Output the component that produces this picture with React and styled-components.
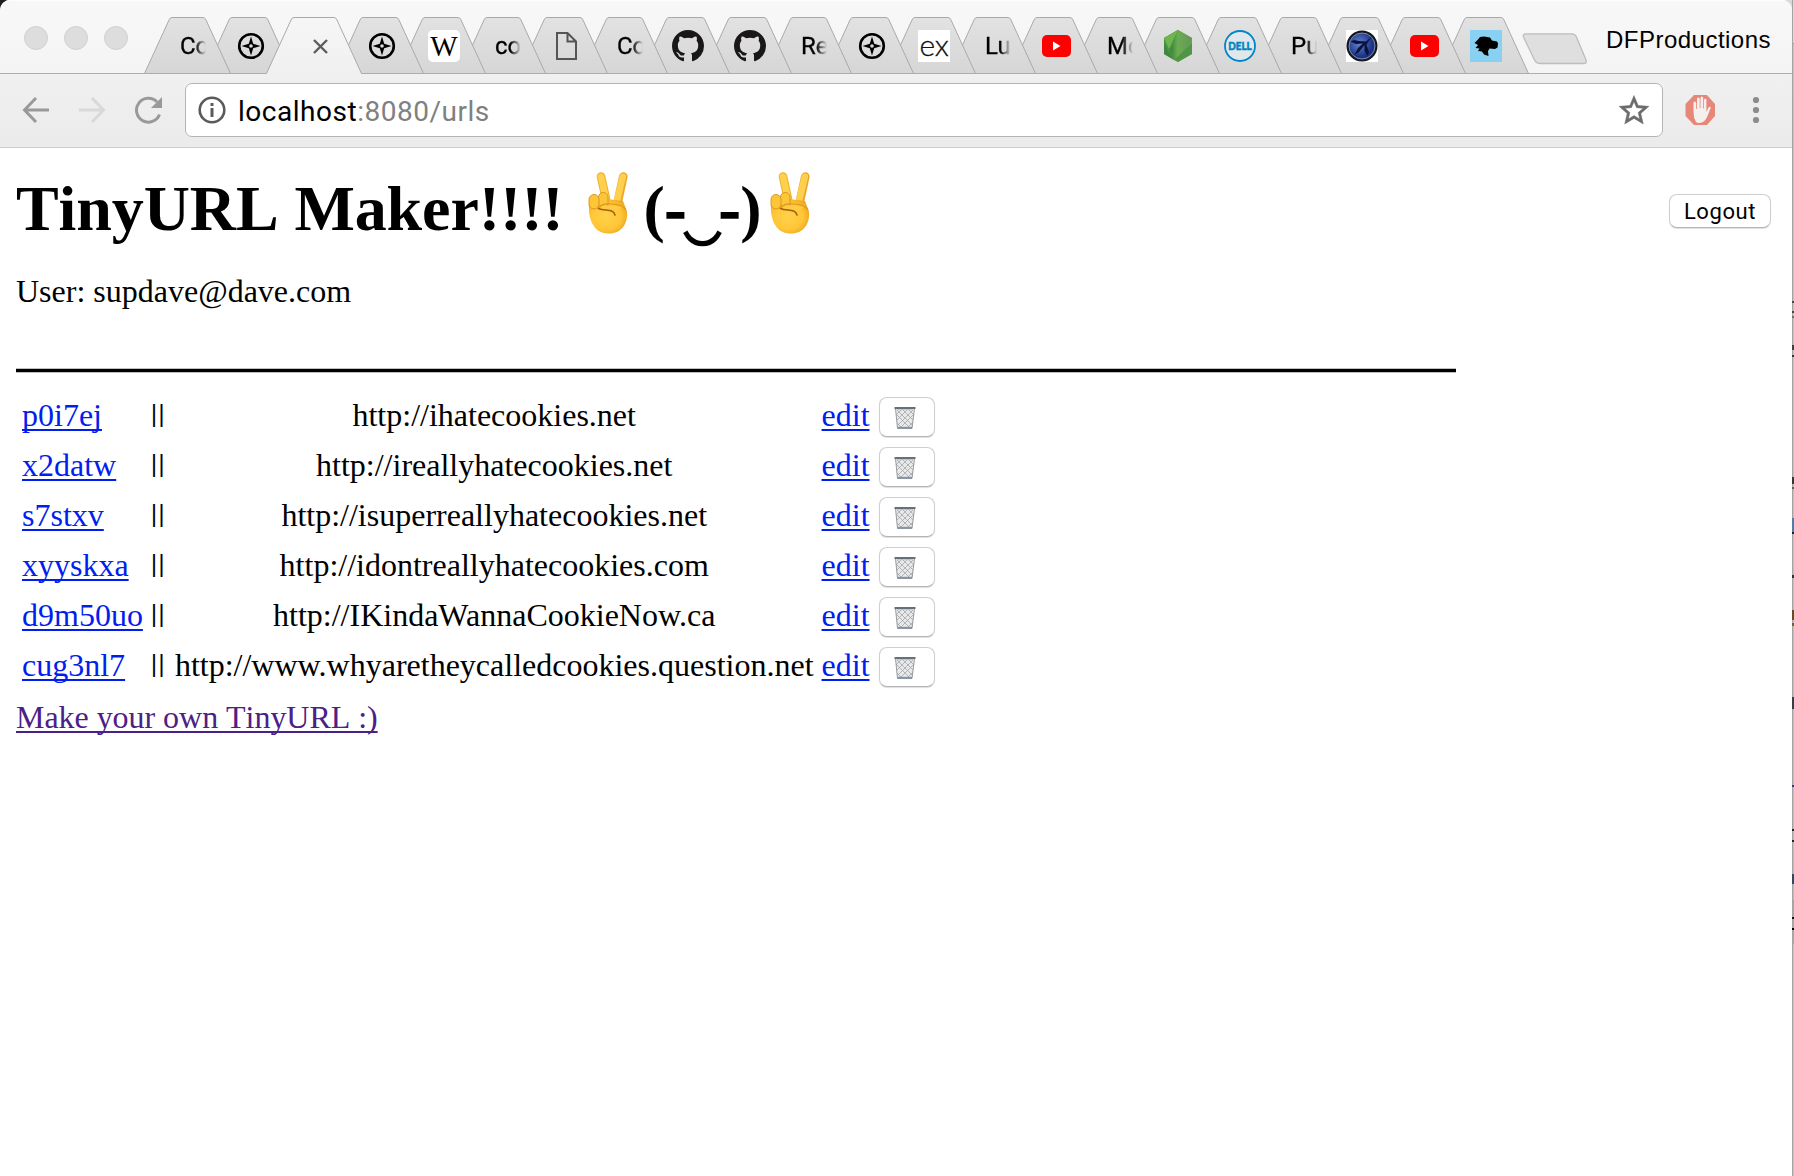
import React from "react";
import styled, { createGlobalStyle } from "styled-components";

const ui = `Roboto, "Liberation Sans", sans-serif`;
const serif = `"Liberation Serif", "Times New Roman", serif`;

const GlobalStyle = createGlobalStyle`
  *, *::before, *::after { box-sizing: border-box; }
  html, body { margin: 0; padding: 0; background: #b9b9b8; overflow: hidden; }
`;

const Desktop = styled.div`
  display: flex;
  width: 1794px;
  height: 1176px;
  overflow: hidden;
  background: linear-gradient(90deg, #1d1d22 50%, #d9d9d9 50%);
`;

const Window = styled.div`
  display: flex;
  flex-direction: column;
  width: 1792px;
  height: 1176px;
  border-radius: 10px 10px 0 0;
  overflow: hidden;
  background: #fff;
`;

const Behind = styled.div`
  display: flex;
  flex-direction: column;
  width: 2px;
  height: 1176px;
  border-left: 1px solid #a4a4a4;
  background: linear-gradient(#dadada 43px, #9f9f9f 43px, #9f9f9f 44px, #c4c4c4 44px, #bcbcbc 900px, #a3a9ad 900px, #a3a9ad 944px, #c4c4c4 944px);
`;

const Speck = styled.i`
  display: block;
  flex: none;
  width: 2px;
  margin-left: -1px;
  height: ${(p) => p.$h}px;
  margin-top: ${(p) => p.$gap}px;
  background: ${(p) => p.$color};
`;

const TitleBar = styled.header`
  display: flex;
  height: 74px;
  flex: none;
  padding-left: 24px;
  background: linear-gradient(#f8f8f8, #f4f4f4);
  box-shadow: inset 0 -1px #adadad, inset 0 1px #fdfdfd;
`;

const Lights = styled.div`
  display: flex;
  gap: 16px;
  padding-top: 26px;
  width: 120px;
  flex: none;
`;

const Light = styled.span`
  width: 24px;
  height: 24px;
  border-radius: 50%;
  border: 1px solid #d0d0d0;
  background: #dddddd;
`;

const TabStrip = styled.nav`
  display: flex;
  padding-top: 17px;
  height: 74px;
  isolation: isolate;
`;

const TabBox = styled.div`
  position: relative;
  display: flex;
  width: ${(p) => p.$w}px;
  height: 57px;
  flex: none;
  margin-right: -27px;
  z-index: ${(p) => p.$z};
  padding: 13px 0 0 ${(p) => (p.$text ? 36 : 31)}px;
`;

const TabShape = styled.svg`
  position: absolute;
  inset: 0;
  z-index: -1;
`;

const TabLabel = styled.span`
  width: 26px;
  height: 32px;
  white-space: nowrap;
  font: 24px/32px ${ui};
  -webkit-text-stroke: 0.3px #000;
  color: #000;
  mask-image: linear-gradient(90deg, #000 58%, transparent 100%);
`;

const TabIcon = styled.svg`
  width: 32px;
  height: 32px;
  flex: none;
`;

const ExIcon = styled.span`
  width: 32px;
  height: 32px;
  background: #fff;
  color: #111;
  font: 300 30px/29px Lato, sans-serif;
  -webkit-text-stroke: 0.3px #111;
  letter-spacing: -0.3px;
  text-align: center;
`;

const WikiIcon = styled.span`
  width: 32px;
  height: 32px;
  border-radius: 5px;
  background: #fff;
  color: #000;
  font: 29px/33px ${serif};
  display: flex;
  justify-content: center;
`;

const NewTab = styled.svg`
  margin: 33px 0 0 20px;
  flex: none;
`;

const Profile = styled.span`
  margin-left: auto;
  padding: 25px 21px 0 0;
  font: 24px/30px "Liberation Sans", Arial, sans-serif;
  letter-spacing: 0.48px;
  color: #000;
`;

const Toolbar = styled.div`
  display: flex;
  align-items: flex-start;
  flex: none;
  height: 74px;
  padding: 9px 0 0 22px;
  background: linear-gradient(#f0f0f0, #ebebeb);
  border-bottom: 1px solid #cbcbcb;
`;

const NavIcon = styled.svg`
  width: 28px;
  height: 28px;
  flex: none;
  margin: 13px ${(p) => p.$gap}px 0 0;
`;

const AddressBar = styled.div`
  display: flex;
  align-items: center;
  width: 1478px;
  height: 54px;
  border: 1px solid #b4b4b4;
  border-radius: 7px;
  background: #fff;
  padding: 0 13px 0 12px;
`;

const Address = styled.span`
  flex: 1;
  margin-left: 12px;
  font: 28px/50px ${ui};
  letter-spacing: 0.52px;
  padding-top: 3px;
  color: #808080;
`;

const Host = styled.span`
  color: #000;
`;

const ActionIcon = styled.svg`
  flex: none;
  margin: ${(p) => p.$m};
`;

const Page = styled.main`
  display: flex;
  flex-direction: column;
  flex: 1;
  padding: 0 21px 0 16px;
  font: 32px/37px ${serif};
  color: #000;
`;

const PageHead = styled.div`
  display: flex;
  justify-content: space-between;
  align-items: flex-start;
  height: 125px;
`;

const Title = styled.h1`
  display: flex;
  margin: 24px 0 0;
  font: bold 64px/74px ${serif};
  font-kerning: none;
  letter-spacing: -0.1px;
  white-space: pre;
`;

const Hand = styled.svg`
  flex: none;
  margin-top: -3px;
`;

const Eye = styled.span`
  -webkit-text-stroke: 1.4px #000;
`;

const Smile = styled.span`
  width: 33px;
  display: inline-flex;
  justify-content: center;
`;

const Button = styled.button`
  display: flex;
  align-items: center;
  justify-content: center;
  padding: 1px ${(p) => p.$nudge || 0}px 0 0;
  margin: ${(p) => p.$m};
  width: ${(p) => p.$w}px;
  height: ${(p) => p.$h}px;
  border: 1px solid #cfcfcf;
  border-bottom-color: #b4b4b4;
  border-radius: 8px;
  background: #fff;
  box-shadow: 0 1px 1px rgba(0, 0, 0, 0.13);
  font: 22px/30px ${ui};
  letter-spacing: 0.6px;
  color: #000;
`;

const User = styled.p`
  margin: 0;
  height: 95px;
`;

const Rule = styled.div`
  width: 1440px;
  height: 5px;
  background: #000;
  border: solid #c0c0c0;
  border-width: 1px 0;
`;

const Table = styled.table`
  margin-top: 17px;
  align-self: flex-start;
  border-collapse: separate;
  border-spacing: 4px;
`;

const Cell = styled.td`
  height: 46px;
  padding: 0 2px ${(p) => (p.$control ? 0 : 4)}px;
  line-height: 37px;
  text-align: ${(p) => (p.$center ? "center" : "left")};
  vertical-align: middle;
`;

const Link = styled.a`
  color: ${(p) => (p.$visited ? "#4b2087" : "#001eee")};
  font-kerning: ${(p) => (p.$visited ? "none" : "auto")};
  text-decoration: underline;
  text-decoration-thickness: 2px;
  text-underline-offset: 3px;
  text-decoration-skip-ink: none;
`;

const Bars = styled.span`
  display: block;
  width: 16px;
  padding: 0 0 7px;
  font: 23px/30px "Liberation Sans", sans-serif;
  letter-spacing: 1.7px;
`;

const Footer = styled.div`
  margin-top: 5px;
  letter-spacing: -0.04px;
`;

const Compass = () => (
  <TabIcon viewBox="0 0 32 32">
    <circle cx="16" cy="16" r="11.8" fill="none" stroke="#000" strokeWidth="2.6" />
    <path fillRule="evenodd" d="M16 6.5 18.2 13.8 25.5 16 18.2 18.2 16 25.5 13.8 18.2 6.5 16 13.8 13.8Z M16 14.2A1.8 1.8 0 1 0 16 17.8 1.8 1.8 0 0 0 16 14.2Z" />
  </TabIcon>
);

const Github = () => (
  <TabIcon viewBox="0 0 16 16">
    <path fill="#191717" d="M8 0C3.58 0 0 3.58 0 8c0 3.54 2.29 6.53 5.47 7.59.4.07.55-.17.55-.38 0-.19-.01-.82-.01-1.49-2.01.37-2.53-.49-2.69-.94-.09-.23-.48-.94-.82-1.13-.28-.15-.68-.52-.01-.53.63-.01 1.08.58 1.23.82.72 1.21 1.87.87 2.33.66.07-.52.28-.87.51-1.07-1.78-.2-3.64-.89-3.64-3.95 0-.87.31-1.59.82-2.15-.08-.2-.36-1.02.08-2.12 0 0 .67-.21 2.2.82.64-.18 1.32-.27 2-.27s1.36.09 2 .27c1.53-1.04 2.2-.82 2.2-.82.44 1.1.16 1.92.08 2.12.51.56.82 1.27.82 2.15 0 3.07-1.87 3.75-3.65 3.95.29.25.54.73.54 1.48 0 1.07-.01 1.93-.01 2.2 0 .21.15.46.55.38A8.01 8.01 0 0 0 16 8c0-4.42-3.58-8-8-8" />
  </TabIcon>
);

const Doc = () => (
  <TabIcon viewBox="0 0 32 32">
    <path d="M7 3H17.5L26 11.5V29H7ZM17.5 3V11.5H26" fill="none" stroke="#555" strokeWidth="2" />
  </TabIcon>
);

const Youtube = () => (
  <TabIcon viewBox="0 0 32 32">
    <rect x="2" y="5" width="29" height="22" rx="5" fill="#f00" />
    <path d="M13 11.5V20.5L20.5 16Z" fill="#fff" />
  </TabIcon>
);

const Node = () => (
  <TabIcon viewBox="0 0 32 32">
    <defs>
      <linearGradient id="node" x1="0" x2="1"><stop offset="0.2" stopColor="#3f873f" /><stop offset="0.45" stopColor="#6cac50" /><stop offset="1" stopColor="#63965a" /></linearGradient>
    </defs>
    <path d="M16 0 30 8V24L16 32 2 24V8Z" fill="#63a64c" />
    <path d="M2 11V24L5.5 20ZM2 24 5.5 20 12 30Z" fill="#3f873f" />
    <path d="M16 0 30 8 24 21 12 30 5 18 4 8Z" fill="url(#node)" />
    <path d="M16 0 2 8V14L12 30 8 20Z" fill="#4a9340" />
    <path d="M16 0 2 8 7 19Z" fill="#6fb650" />
    <path d="M30 13V24L16 32 12 30Z" fill="#4b9245" opacity=".8" />
  </TabIcon>
);

const DellText = styled.text`
  font: 900 11px Lato, sans-serif;
  fill: #0085c3;
  stroke: #0085c3;
  stroke-width: 0.5px;
`;

const Dell = () => (
  <TabIcon viewBox="0 0 32 32">
    <circle cx="16" cy="16" r="15" fill="#e1e8ec" stroke="#0085c8" strokeWidth="1.8" />
    <DellText x="4.2" y="19.800" textLength="23.600" lengthAdjust="spacingAndGlyphs">DELL</DellText>
  </TabIcon>
);

const Wasp = () => (
  <TabIcon viewBox="0 0 32 32">
    <defs>
      <radialGradient id="orb" cx=".4" cy=".4"><stop offset="0" stopColor="#6784cc" /><stop offset="1" stopColor="#1d3388" /></radialGradient>
    </defs>
    <rect width="32" height="32" fill="#fff" />
    <circle cx="16" cy="16" r="15.5" fill="#15171f" />
    <circle cx="16" cy="16" r="13" fill="url(#orb)" stroke="#7d8caf" strokeWidth="1" />
    <path d="M26 6.500 20 11.500 13 11 8 10 4.500 11.500 10 14 17 13.500 12 18 8.500 25 13 22 18.500 15 18.500 21 21.500 26 23 22 20.500 15 22 12Z" fill="#0a1240" />
  </TabIcon>
);

const Dog = () => (
  <TabIcon viewBox="0 0 32 32">
    <rect width="32" height="32" fill="#89d1f3" />
    <path d="M4.500 13 8 9.500 10 7 14 6.500 20 7.500 22 10.500 27 11.500 28 13.500 27.500 17.500 25 19 19.500 18.500 18 21 18.500 26 14 24.500 12 21.500 8 21 9.500 18.500 5.500 18 8 15Z" />
  </TabIcon>
);

const TABS = [
  { w: 87, text: "Co" },
  { w: 89, icon: <Compass /> },
  { w: 96, active: true },
  { w: 89, icon: <Compass /> },
  { w: 89, icon: <WikiIcon>W</WikiIcon> },
  { w: 87, text: "co" },
  { w: 89, icon: <Doc /> },
  { w: 87, text: "Co" },
  { w: 89, icon: <Github /> },
  { w: 89, icon: <Github /> },
  { w: 87, text: "Re" },
  { w: 89, icon: <Compass /> },
  { w: 89, icon: <ExIcon>ex</ExIcon> },
  { w: 87, text: "Lu" },
  { w: 89, icon: <Youtube /> },
  { w: 87, text: "Mo" },
  { w: 89, icon: <Node /> },
  { w: 89, icon: <Dell /> },
  { w: 87, text: "Pu" },
  { w: 89, icon: <Wasp /> },
  { w: 89, icon: <Youtube /> },
  { w: 90, icon: <Dog /> },
];

const CloseIcon = styled.svg`
  margin: 9px 0 0 16px;
  width: 15px;
  height: 15px;
`;

function Tab({ tab, index }) {
  const { w, active, text, icon } = tab;
  const outline = `M0.5 56.5 L25 3 Q26 0.5 28 0.5 H${w - 28} Q${w - 26} 0.5 ${w - 25} 3 L${w - 0.5} 56.5`;
  return (
    <TabBox $w={w} $z={active ? 50 : 40 - index} $text={!!text}>
      <TabShape width={w} height="57">
        <defs>
          <linearGradient id={`tab${index}`} x2="0" y2="1">
            <stop offset="0" stopColor={active ? "#f6f6f6" : "#e2e2e2"} />
            <stop offset="1" stopColor={active ? "#f0f0f0" : "#d6d6d6"} />
          </linearGradient>
        </defs>
        <path d={outline} fill={`url(#tab${index})`} stroke="#a9a9a9" />
        {active ? <path d={`M1 56.5H${w - 1}`} stroke="#f0f0f0" /> : <path d={`M0 56.5H${w}`} stroke="#adadad" />}
      </TabShape>
      {text && <TabLabel>{text}</TabLabel>}
      {icon}
      {active && (
        <CloseIcon viewBox="0 0 15 15">
          <path d="M1 1 14 14M14 1 1 14" stroke="#5c5c5c" strokeWidth="2.4" />
        </CloseIcon>
      )}
    </TabBox>
  );
}

const Peace = ({ id }) => (
  <Hand width="64" height="74" viewBox="0 0 64 74" role="img" aria-label="victory hand">
    <defs>
      <radialGradient id={id} cx=".45" cy=".5" r=".65">
        <stop offset="0" stopColor="#ffd24a" /><stop offset=".6" stopColor="#ffc637" /><stop offset="1" stopColor="#e99c16" />
      </radialGradient>
    </defs>
    <path d="M27 30 22 7.500" stroke="#f0b22c" strokeWidth="8.600" strokeLinecap="round" />
    <path d="M27 30 22 7.700" stroke="#ffd04d" strokeWidth="6.500" strokeLinecap="round" />
    <path d="M39 32 44.300 7.500" stroke="#e9a826" strokeWidth="8.600" strokeLinecap="round" />
    <path d="M38 32 43.800 7.700" stroke="#ffd04d" strokeWidth="6.500" strokeLinecap="round" />
    <path d="M10 35C9 49 14 64 29 64.500C43 65 49 54 48 43C47.500 39 45 36 44 32L28 30Z" fill={`url(#${id})`} />
    <rect x="19.500" y="23.500" width="9.500" height="16" rx="4.700" fill="#fdc637" stroke="#d98f1c" strokeWidth=".9" />
    <rect x="10" y="25.500" width="10" height="14.500" rx="5" fill="#fdc637" stroke="#d98f1c" strokeWidth=".9" />
    <path d="M19 40C22 35 26 34.500 33 35C40 35.500 45 37 47 41" fill="none" stroke="#dc951f" strokeWidth="1.200" />
    <path d="M20 39C25 35.800 34 35.800 43 38C38 41 37 44 35 46C34 40 25 42 20 39Z" fill="#ffcb40" />
    <path d="M19.500 39.500C26 42.500 34 39 36 46" fill="none" stroke="#a35f12" strokeWidth="1.600" strokeLinecap="round" />
  </Hand>
);

const Trash = () => (
  <svg width="22" height="24" viewBox="0 0 22 24" role="img" aria-label="wastebasket">
    <path d="M1.500 2.500 3.500 22.500H18L20.500 2.500Z" fill="#e9e9e9" stroke="#8c9093" strokeWidth=".9" />
    <path d="M2 8 16 22M3 4 18 19M8 3 19 14M14 3 20 9M20 8 6 22M19 4 4 19M14 3 3 14M8 3 2 9M3 17 8 22M19 16 13 22" stroke="#95999c" strokeWidth=".65" />
    <path d="M0.500 2H21.500" stroke="#65707a" strokeWidth="2" />
    <path d="M3 3.700H19" stroke="#b4c1ca" strokeWidth=".9" />
    <path d="M3.500 21.700H18" stroke="#8396a8" strokeWidth="1.800" />
  </svg>
);

const SPECKS = [
  [301, 2, "#4c4640"],
  [311, 2, "#4c4640"],
  [316, 2, "#7d6a55"],
  [345, 5, "#3a3f45"],
  [355, 2, "#31363b"],
  [477, 7, "#3d352b"],
  [487, 2, "#6a6058"],
  [518, 14, "#4f7fa8"],
  [532, 2, "#222222"],
  [575, 3, "#333333"],
  [610, 10, "#6b4a2a"],
  [623, 3, "#7d5a34"],
  [697, 12, "#33404a"],
  [785, 2, "#2b3a8a"],
  [829, 2, "#222222"],
  [840, 2, "#222222"],
  [874, 10, "#2f4a60"],
  [917, 2, "#111111"],
  [928, 2, "#000000"],
];

const URLS = [
  ["p0i7ej", "http://ihatecookies.net"],
  ["x2datw", "http://ireallyhatecookies.net"],
  ["s7stxv", "http://isuperreallyhatecookies.net"],
  ["xyyskxa", "http://idontreallyhatecookies.com"],
  ["d9m50uo", "http://IKindaWannaCookieNow.ca"],
  ["cug3nl7", "http://www.whyaretheycalledcookies.question.net"],
];

export default function App() {
  return (
    <Desktop>
      <GlobalStyle />
      <Window>
        <TitleBar>
          <Lights><Light /><Light /><Light /></Lights>
          <TabStrip>
            {TABS.map((tab, i) => <Tab key={i} tab={tab} index={i} />)}
          </TabStrip>
          <NewTab width="67" height="32" viewBox="0 0 67 32">
            <path d="M4 0.8H50Q53 0.8 54.5 4L64 27Q65 30.5 62 30.5H19Q14 30.5 12.5 27L1.5 4Q0.5 0.8 4 0.8Z" fill="#dfdfdf" stroke="#bdbdbd" strokeWidth="1.3" />
          </NewTab>
          <Profile>DFProductions</Profile>
        </TitleBar>
        <Toolbar>
          <NavIcon viewBox="0 0 28 28" $gap={28}>
            <path d="M27 14H3M14 2 2.500 14 14 26" fill="none" stroke="#999" strokeWidth="3" />
          </NavIcon>
          <NavIcon viewBox="0 0 28 28" $gap={28}>
            <path d="M1 14H25M14 2 25.500 14 14 26" fill="none" stroke="#d9d9d9" strokeWidth="3" />
          </NavIcon>
          <NavIcon viewBox="0 0 28 28" $gap={23}>
            <path d="M25.500 18.500A11.900 11.900 0 1 1 23 6" fill="none" stroke="#999" strokeWidth="3" />
            <path d="M28 1V12H17Z" fill="#999" />
          </NavIcon>
          <AddressBar>
            <svg width="28" height="28" viewBox="0 0 28 28">
              <circle cx="14" cy="14" r="12.3" fill="none" stroke="#5a5a5a" strokeWidth="2.6" />
              <path d="M14 12V21M14 7V10" stroke="#5a5a5a" strokeWidth="3" />
            </svg>
            <Address><Host>localhost</Host>:8080/urls</Address>
            <svg width="30" height="30" viewBox="0 0 24 24">
              <path fill="#6b6b6b" stroke="#6b6b6b" strokeWidth=".3" d="M22 9.240l-7.190-.62L12 2 9.190 8.630 2 9.240l5.460 4.730L5.820 21 12 17.270 18.180 21l-1.630-7.030L22 9.240zM12 15.400l-3.760 2.270 1-4.280-3.320-2.880 4.380-.38L12 6.100l1.710 4.040 4.380.38-3.320 2.880 1 4.280L12 15.400z" transform="translate(-2.400 -2) scale(1.200)" />
            </svg>
          </AddressBar>
          <ActionIcon $m="12px 0 0 22px" width="31" height="30" viewBox="0 0 31 30">
            <path d="M9 0H22L30 9V21L22 30H9L0.500 21V9Z" fill="#e7877a" />
            <path d="M11 27Q8.500 23 8.500 17V8Q8.500 6.500 9.800 6.500T11.200 8V14H12V4Q12 2.500 13.300 2.500T14.700 4V13H15.500V3Q15.500 1.500 16.800 1.500T18.200 3V13.500H19V5Q19 3.800 20.200 3.800T21.400 5V17L23.500 12.500Q25 11 25.800 12.500L22.500 21Q20.500 26 17 27.500Q13 28.500 11 27Z" fill="#f4f0ee" />
          </ActionIcon>
          <ActionIcon $m="13px 0 0 36px" width="8" height="28" viewBox="0 0 8 28">
            <circle cx="4" cy="4" r="3.1" fill="#8c8c8c" />
            <circle cx="4" cy="14" r="3.1" fill="#8c8c8c" />
            <circle cx="4" cy="24" r="3.1" fill="#8c8c8c" />
          </ActionIcon>
        </Toolbar>
        <Page>
          <PageHead>
            <Title>
              TinyURL Maker!!!!{" "}
              <Peace id="hand1" />
              (<Eye>-</Eye><Smile>‿</Smile><Eye>-</Eye>)
              <Peace id="hand2" />
            </Title>
            <Button $w={102} $h={34} $m="46px 0 0">Logout</Button>
          </PageHead>
          <User>User: supdave@dave.com</User>
          <Rule />
          <Table>
            <tbody>
              {URLS.map(([key, url]) => (
                <tr key={key}>
                  <Cell><Link>{key}</Link></Cell>
                  <Cell $control><Bars>||</Bars></Cell>
                  <Cell $center>{url}</Cell>
                  <Cell><Link>edit</Link></Cell>
                  <Cell $control><Button $w={56} $h={40} $m="0 0 0 1px" $nudge={3}><Trash /></Button></Cell>
                </tr>
              ))}
            </tbody>
          </Table>
          <Footer><Link $visited>Make your own TinyURL :)</Link></Footer>
        </Page>
      </Window>
      <Behind>
        {SPECKS.map(([y, h, color], i) => {
          const end = i === 0 ? 0 : SPECKS[i - 1][0] + SPECKS[i - 1][1];
          return <Speck key={y} $h={h} $gap={y - end} $color={color} />;
        })}
      </Behind>
    </Desktop>
  );
}
